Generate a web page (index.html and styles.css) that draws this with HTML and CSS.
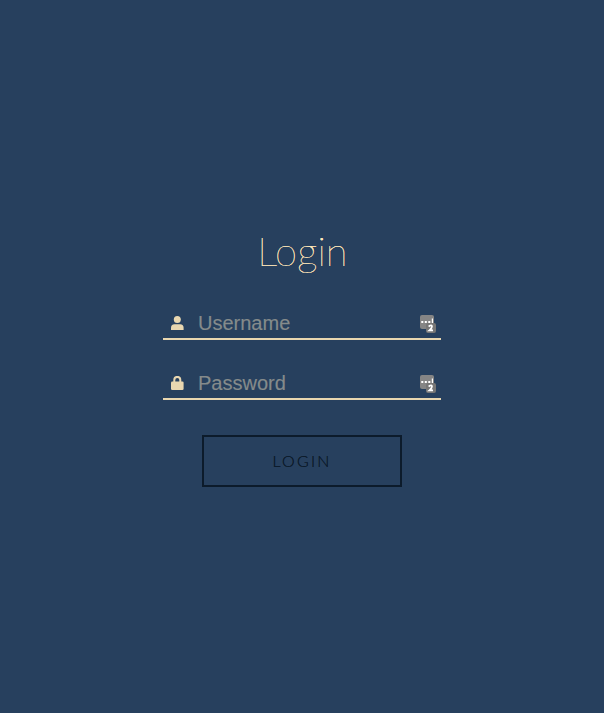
FILE: index.html
```html
<!DOCTYPE html>
<html lang="en">
<head>
<meta charset="utf-8">
<title>Login</title>
<link rel="stylesheet" href="styles.css">
</head>
<body>
<form class="login">
  <h1 class="title">Login</h1>
  <label class="field">
    <svg class="field-icon" viewBox="0 0 13 14"><circle cx="6.3" cy="3.5" r="3.5"/><path d="M0 14v-2.2Q0 8.2 3.5 8.2h5.6Q12.6 8.2 12.6 11.8V14z"/></svg>
    <input class="input" type="text" placeholder="Username">
    <svg class="manager" viewBox="0 0 16 18"><rect width="14" height="14" rx="2" fill="#858585"/><rect x="6" y="8" width="10" height="10" rx="2" fill="#777"/><path d="M1.3 6h2v2h-2zM4.8 6h2v2h-2zM8.3 6h2v2h-2zM11.8 3.5h1.2V8h-1.2z" fill="#fff"/><path d="M8.6 11.4Q12 9.4 12 11.6Q12 13.2 9.4 15.3H13" fill="none" stroke="#fff" stroke-width="1.7"/></svg>
  </label>
  <label class="field">
    <svg class="field-icon" viewBox="0 0 13 14"><path d="M3.3 7V4a3 3.1 0 0 1 6 0V7" fill="none" stroke="#e9d7b0" stroke-width="2"/><rect y="5.5" width="12.6" height="8.5" rx="1.2"/></svg>
    <input class="input" type="password" placeholder="Password">
    <svg class="manager" viewBox="0 0 16 18"><rect width="14" height="14" rx="2" fill="#858585"/><rect x="6" y="8" width="10" height="10" rx="2" fill="#777"/><path d="M1.3 6h2v2h-2zM4.8 6h2v2h-2zM8.3 6h2v2h-2zM11.8 3.5h1.2V8h-1.2z" fill="#fff"/><path d="M8.6 11.4Q12 9.4 12 11.6Q12 13.2 9.4 15.3H13" fill="none" stroke="#fff" stroke-width="1.7"/></svg>
  </label>
  <button class="submit" type="button">LOGIN</button>
</form>
</body>
</html>
```

FILE: styles.css
```css
* {
  box-sizing: border-box;
}

body {
  margin: 0;
  min-height: 100vh;
  background: #27405e;
  font-family: Lato, sans-serif;
}

.login {
  display: flex;
  flex-direction: column;
  align-items: center;
  padding-top: 227px;
}

.title {
  margin: 0 0 33px;
  padding-left: 1px;
  color: #ffe8b8;
  font-size: 40px;
  font-weight: 100;
  line-height: 48px;
  letter-spacing: 0.1px;
  text-shadow: 0 0 0 #f3deb5, 0 0 0 #f3deb5;
}

.field {
  display: flex;
  width: 278px;
  height: 32px;
  margin-bottom: 28px;
  padding: 0 5px 0 8px;
  border-bottom: 2px solid #e9d7b0;
}

.field-icon {
  width: 13px;
  height: 14px;
  margin-top: 8px;
  fill: #e9d7b0;
}

.input {
  flex: 1;
  min-width: 0;
  height: 30px;
  margin-left: 14px;
  padding: 0;
  border: 0;
  outline: 0;
  background: transparent;
  color: #e9d7b0;
  font: 20px "Liberation Sans", sans-serif;
}

.input::placeholder {
  color: #858b8b;
  -webkit-text-stroke: 0.15px #858b8b;
}

.manager {
  width: 16px;
  height: 18px;
  margin-top: 7px;
}

.submit {
  width: 200px;
  height: 52px;
  margin-top: 7px;
  padding: 0 0 2px;
  border: 2px solid #0c1b2b;
  background: transparent;
  color: #0c1b2b;
  font: 300 16px Lato, sans-serif;
  letter-spacing: 2.2px;
  text-shadow: 0 0 0 #0c1b2b;
}
```
